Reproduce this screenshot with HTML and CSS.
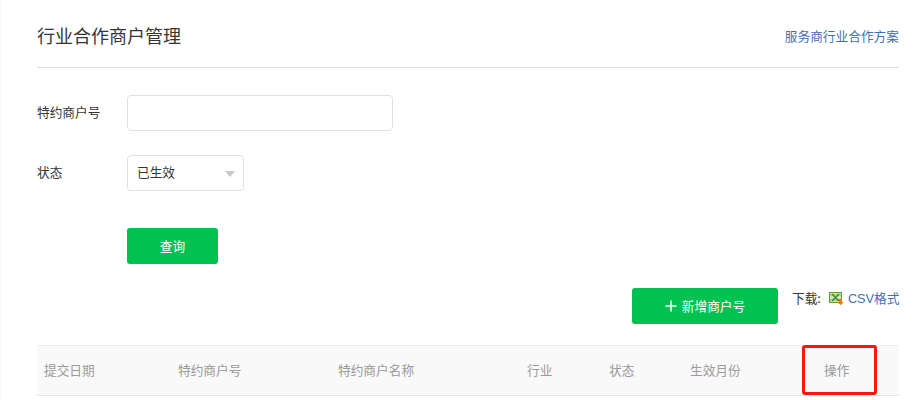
FILE: index.html
```html
<!DOCTYPE html>
<html lang="zh-CN">
<head>
<meta charset="utf-8">
<title>行业合作商户管理</title>
<link rel="stylesheet" href="styles.css">
</head>
<body>
<main class="page">
  <header class="head">
    <h1 class="title">行业合作商户管理</h1>
    <a class="link" href="#">服务商行业合作方案</a>
  </header>
  <form class="form">
    <div class="row">
      <label class="label">特约商户号</label>
      <input class="input" type="text">
    </div>
    <div class="row">
      <label class="label">状态</label>
      <div class="select"><span>已生效</span><i class="caret"></i></div>
    </div>
    <div class="row row-btn">
      <button class="btn btn-query" type="button">查询</button>
    </div>
  </form>
  <div class="actions">
    <button class="btn btn-add" type="button">
      <svg class="plus" width="12" height="12" viewBox="0 0 12 12"><path d="M6 0.500v11M0.500 6h11" stroke="#fff" stroke-width="1.6" fill="none"/></svg>
      <span>新增商户号</span>
    </button>
    <div class="download">
      <span>下载:</span>
      <svg class="xls" width="15" height="13" viewBox="0 0 15 13">
        <rect x="0.5" y="0.5" width="12" height="10" fill="#cfe6b8" stroke="#5c9a3c"/>
        <path d="M1 3h11M1 8h11" stroke="#8cc06a" stroke-width="1" fill="none"/>
        <path d="M3 2l7 7M10 2l-7 7" stroke="#3f8a2c" stroke-width="1.500" fill="none"/>
        <path d="M10 7h3v3h2l-3.500 3-3.500-3h2z" fill="#f0760f"/>
      </svg>
      <a class="csv" href="#">CSV格式</a>
    </div>
  </div>
  <div class="table">
    <div class="cell">提交日期</div>
    <div class="cell">特约商户号</div>
    <div class="cell">特约商户名称</div>
    <div class="cell">行业</div>
    <div class="cell">状态</div>
    <div class="cell">生效月份</div>
    <div class="cell">操作<span class="mark"></span></div>
  </div>
</main>
</body>
</html>
```

FILE: styles.css
```css
* { box-sizing: border-box; }
html, body { margin: 0; padding: 0; height: 400px; overflow: hidden; background: #fff; }
body {
  font-family: "Noto Sans CJK SC", "Liberation Sans", sans-serif;
  font-size: 12.7px;
  color: #353535;
}
.page { padding: 0 21px 0 36px; border-left: 1px solid #f7f7f7; height: 400px; }
.head {
  height: 68px;
  display: flex;
  align-items: center;
  justify-content: space-between;
  border-bottom: 1px solid #e0e0e0;
  padding-top: 3px;
}
.title { margin: 0; font-size: 18px; font-weight: 400; color: #353535; line-height: 26px; }
.link { color: #3f6fb4; text-decoration: none; font-size: 12.7px; }
.form { padding-top: 27px; }
.row { display: flex; align-items: center; height: 36px; margin-bottom: 24px; }
.row-btn { margin-top: 37px; margin-bottom: 0; padding-left: 90px; }
.label { width: 90px; flex: none; padding-bottom: 3px; }
.input {
  width: 266px; height: 36px;
  border: 1px solid #e1e1e1; border-radius: 4px; background: #fff; outline: 0;
}
.select {
  width: 117px; height: 36px;
  border: 1px solid #e1e1e1; border-radius: 4px;
  display: flex; align-items: center; justify-content: space-between;
  padding: 0 8px 3px 9px;
}
.caret {
  width: 0; height: 0;
  border-left: 5.500px solid transparent;
  border-right: 5.500px solid transparent;
  border-top: 6px solid #c8c8c8;
  margin-top: 5px;
}
.btn {
  height: 36px; border: 0; border-radius: 3px;
  background: #00c250; color: #fff;
  font: inherit; padding: 0 0 2px;
  display: flex; align-items: center; justify-content: center;
}
.btn-query { width: 91px; }
.actions { display: flex; justify-content: flex-end; align-items: flex-start; margin-top: 24px; }
.btn-add { width: 146px; gap: 5px; }
.plus { margin-top: 2px; }
.download {
  margin-left: 14px; width: 107px; height: 18px; flex: none;
  display: flex; align-items: center; color: #353535; white-space: nowrap;
}
.xls { margin-left: 8px; margin-right: 4px; flex: none; margin-top: 2px; }
.csv { color: #3f6fb4; text-decoration: none; font-family: "Liberation Sans", "Noto Sans CJK SC", sans-serif; }
.table {
  display: grid;
  grid-template-columns: 134px 160px 189px 82px 81px 134px 82px;
  height: 51px; margin-top: 21px;
  background: #f9f9f9;
  border-top: 1px solid #ebebeb;
  border-bottom: 1px solid #e6e6e6;
  color: #9a9a9a;
}
.cell { position: relative; display: flex; align-items: center; padding: 0 0 3px 7px; }
.mark {
  position: absolute; left: -15px; top: -1px;
  width: 75px; height: 50px;
  border: 3px solid #f5180c; border-radius: 3px;
}
```
